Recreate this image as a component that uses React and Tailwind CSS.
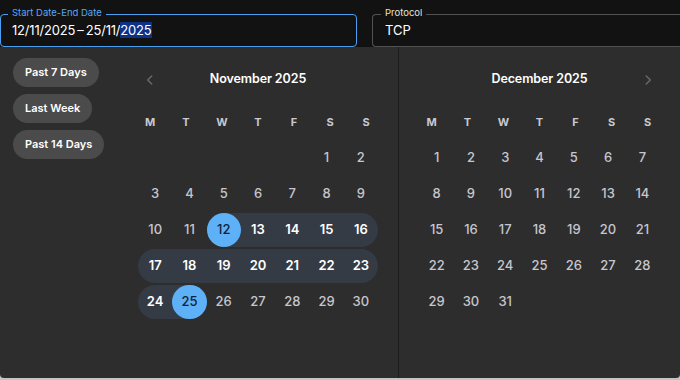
import React from 'react';

const WEEKDAYS = ['M', 'T', 'W', 'T', 'F', 'S', 'S'];
const PRESETS = ['Past 7 Days', 'Last Week', 'Past 14 Days'];

// blank cells before the 1st, days in month
const MONTHS = [
  { title: 'November 2025', offset: 5, days: 30, rangeStart: 12, rangeEnd: 25, arrow: 'left' },
  { title: 'December 2025', offset: 0, days: 31, rangeStart: null, rangeEnd: null, arrow: 'right' },
];

function Chevron({ dir }) {
  return (
    <svg width="14" height="14" viewBox="0 0 24 24" fill="none" stroke="#6a6a6a" strokeWidth="2.4" strokeLinecap="round" strokeLinejoin="round">
      {dir === 'left' ? <path d="M15 5l-7 7 7 7" /> : <path d="M9 5l7 7-7 7" />}
    </svg>
  );
}

function DayCell({ day, col, month }) {
  if (!day) return <div className="h-[34px]" />;
  const { rangeStart, rangeEnd } = month;
  const inRange = rangeStart && day >= rangeStart && day <= rangeEnd;
  const isEdge = day === rangeStart || day === rangeEnd;
  const roundL = inRange && (col === 0 || day === rangeStart);
  const roundR = inRange && (col === 6 || day === rangeEnd);

  return (
    <div
      className={`h-[34px] flex items-center justify-center ${inRange ? 'bg-[#343b45]' : ''} ${roundL ? 'rounded-l-full' : ''} ${roundR ? 'rounded-r-full' : ''}`}
    >
      {isEdge ? (
        <div className="w-full h-full rounded-full bg-[#5eb0f7] flex items-center justify-center text-[#10233a] text-[13px] font-medium">
          {day}
        </div>
      ) : (
        <span className={`text-[13px] ${inRange ? 'text-white font-semibold' : 'text-[#c6c6ce] font-medium'}`}>{day}</span>
      )}
    </div>
  );
}

function Calendar({ month, className }) {
  const cells = [];
  for (let i = 0; i < month.offset; i++) cells.push(null);
  for (let d = 1; d <= month.days; d++) cells.push(d);
  while (cells.length % 7) cells.push(null);
  const rows = [];
  for (let i = 0; i < cells.length; i += 7) rows.push(cells.slice(i, i + 7));

  return (
    <div className={className}>
      <div className="h-[61px] relative flex items-center justify-center">
        <span className="text-white text-[12.5px] font-semibold mt-[3px] tracking-[-0.1px]">{month.title}</span>
        <div className={`absolute top-[26px] ${month.arrow === 'left' ? 'left-[25px]' : 'right-[25px]'}`}>
          <Chevron dir={month.arrow} />
        </div>
      </div>
      <div className="w-[252px] mx-auto grid grid-cols-7 h-[28px] items-center">
        {WEEKDAYS.map((w, i) => (
          <span key={i} className="text-center text-[11px] font-bold text-[#c9c9d1]">{w}</span>
        ))}
      </div>
      <div className="w-[240px] mx-auto mt-[4px]">
        {rows.map((row, r) => (
          <div key={r} className="grid grid-cols-7 py-[1px]">
            {row.map((d, c) => (
              <DayCell key={c} day={d} col={c} month={month} />
            ))}
          </div>
        ))}
      </div>
    </div>
  );
}

export default function App() {
  return (
    <div className="w-[680px] h-[380px] overflow-hidden bg-[#c4c4c4]" style={{ fontFamily: 'Inter, "Noto Sans", sans-serif' }}>
      {/* Inputs bar */}
      <div className="h-[47px] bg-[#121212] flex items-start pt-[14px] gap-[15px]">
        <div className="relative w-[357px] h-[33px] border border-[#4a9ff0] rounded-[4px] flex items-center pl-[11px]">
          <span className="absolute left-[7px] top-[-9px] px-[4px] bg-[#121212] text-[9.5px] leading-[14px] text-[#56a8f4]">
            Start Date-End Date
          </span>
          <span className="text-[13px] text-white tracking-[-0.2px]">
            12/11/2025{'\u2009'}–{'\u2009'}25/11/<span className="bg-[#0e3287]">2025</span>
          </span>
        </div>
        <div className="relative flex-1 h-[33px] border border-[#525252] rounded-l-[4px] border-r-0 flex items-center pl-[12px]">
          <span className="absolute left-[8px] top-[-9px] px-[4px] bg-[#121212] text-[9.5px] leading-[14px] text-[#e6e2d2]">
            Protocol
          </span>
          <span className="text-[13px] text-white">TCP</span>
        </div>
      </div>

      {/* Picker popover */}
      <div className="h-[331px] bg-[#2d2d2d] rounded-b-[4px] flex">
        <div className="w-[118px] pl-[13px] pt-[11px] flex flex-col items-start gap-[7px]">
          {PRESETS.map((p) => (
            <div key={p} className="h-[29px] px-[12px] rounded-full bg-[#4b4b4b] flex items-center text-white text-[11px] font-semibold">
              {p}
            </div>
          ))}
        </div>
        <Calendar month={MONTHS[0]} className="w-[280px]" />
        <Calendar month={MONTHS[1]} className="flex-1 border-l border-[#1b1b1b]" />
      </div>
    </div>
  );
}
